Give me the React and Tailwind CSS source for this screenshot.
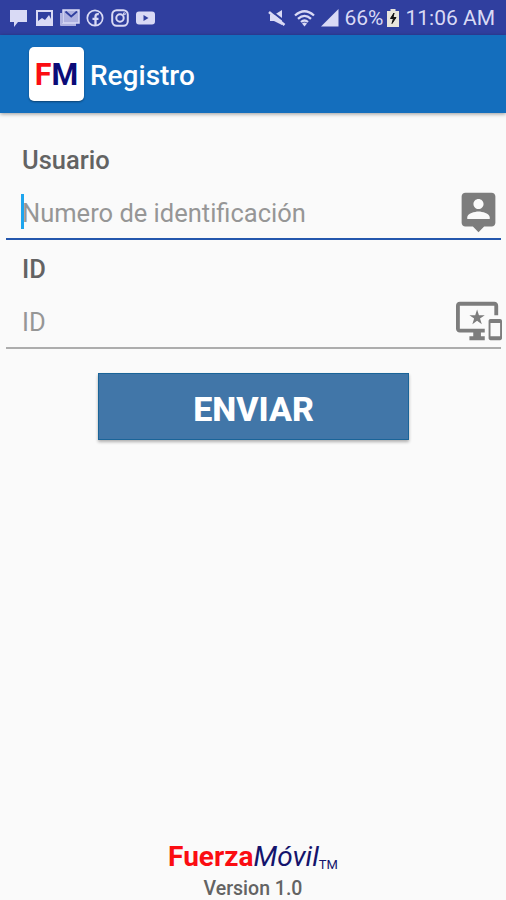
const statusIcons = [
  { id: 'chat', path: 'M1 1h17v12H9l-4 5v-5H1z' },
  { id: 'image', path: 'M1 1h17v16H1zM3 3v9l4-3 3 2 4-5 2 4V3z' },
];

function StatusBar() {
  return (
    <div className="h-[35px] bg-[#303f9f] flex items-center text-[#d9daf5]">
      <div className="flex items-center gap-[7px] pl-[9px]">
        {statusIcons.map((icon) => (
          <svg key={icon.id} className="w-[19px] h-[18px]" viewBox="0 0 19 18" fill="currentColor" fillRule="evenodd">
            <path d={icon.path} />
          </svg>
        ))}
        <svg className="w-[21px] h-[18px] -ml-[2px]" viewBox="0 0 21 18">
          <path d="M3 4H1v12q0 1 1 1h15v-3H3z" fill="currentColor" opacity=".75" />
          <path d="M4 1h16v13H4z" fill="currentColor" opacity=".75" />
          <path d="M6.500 2.500l5.700 5L18 2.500" fill="none" stroke="#303f9f" strokeWidth="1.800" />
          <path d="M4 1h16v13H4z" fill="none" stroke="currentColor" strokeWidth="1.500" />
        </svg>
        <svg className="w-[18px] h-[18px] -ml-[1px]" viewBox="0 0 18 18" fill="none" stroke="currentColor">
          <circle cx="9" cy="9" r="7.700" strokeWidth="1.700" />
          <path d="M9.500 17V7.500q0-2.800 3.300-2.300M6.500 9.800h6" strokeWidth="2.300" />
        </svg>
        <svg className="w-[18px] h-[18px]" viewBox="0 0 18 18" fill="none" stroke="currentColor" strokeWidth="2">
          <rect x="1.200" y="1.200" width="15.600" height="15.600" rx="4.500" />
          <circle cx="9" cy="9" r="3.700" />
          <circle cx="13.300" cy="4.700" r=".5" />
        </svg>
        <svg className="w-[19px] h-[18px]" viewBox="0 0 19 18" fillRule="evenodd" fill="currentColor">
          <path d="M3 2.500h13q3 0 3 3v7q0 3-3 3H3q-3 0-3-3v-7q0-3 3-3zM7.500 6v6l5-3z" />
        </svg>
      </div>
      <div className="flex items-center ml-auto pr-[11px]">
        <svg className="w-[18px] h-[18px]" viewBox="0 0 18 18">
          <path d="M2 6h4l8-5v15L6 12H2z" fill="currentColor" />
          <path d="M1 .500L17.500 13" stroke="#303f9f" strokeWidth="2" />
          <path d="M1 3L16.500 16" stroke="currentColor" strokeWidth="2.600" />
        </svg>
        <svg className="w-[21px] h-[18px] ml-[8px]" viewBox="0 0 21 18" fill="none" stroke="currentColor" strokeWidth="2.300">
          <path d="M1 6.500Q10.500-2 20 6.500M4 9.800Q10.500 4 17 9.800M7 13Q10.500 10 14 13" />
          <path d="M10.500 17.500L8 14.500q2.500-2 5 0z" fill="currentColor" stroke="none" />
        </svg>
        <svg className="w-[18px] h-[18px] ml-[6px]" viewBox="0 0 18 18" fill="currentColor">
          <path d="M17.500 0v17.500H0z" />
        </svg>
        <span className="ml-[5px] pt-[2px] text-[21px] leading-none">66%</span>
        <svg className="w-[12px] h-[18px] ml-[4px]" viewBox="0 0 12 18">
          <path d="M3.500 0h5v2H12v16H0V2h3.500z" fill="#e8e5dc" />
          <path d="M7 4L3.500 9.500h3L5 14.500l4-6H6z" fill="#111" stroke="#111" />
        </svg>
        <span className="ml-[6px] pt-[2px] text-[21px] leading-none">11:06 AM</span>
      </div>
    </div>
  );
}

function Header() {
  return (
    <header className="h-[78px] bg-[#146ebd] flex items-center pl-[29px] shadow-[0_1px_4px_rgba(0,0,0,0.4)]">
      <div className="w-[55px] h-[54px] pt-[2px] rounded-[5px] bg-white flex justify-center items-center shadow-[0_1px_2px_rgba(0,0,0,0.4)]">
        <span className="font-bold text-[30.5px] leading-none">
          <span className="text-[#fb0d12]">F</span>
          <span className="text-[#0b0b78]">M</span>
        </span>
      </div>
      <h1 className="ml-[6px] mt-[4px] text-[28px] leading-none font-medium text-white">Registro</h1>
    </header>
  );
}

function PersonPinIcon() {
  return (
    <svg className="w-[45px] h-[45px] -mt-[1px]" viewBox="0 0 24 24" fill="currentColor">
      <path d="M19 2H5c-1.110 0-2 .9-2 2v14c0 1.100.89 2 2 2h4l3 3 3-3h4c1.100 0 2-.9 2-2V4c0-1.100-.9-2-2-2zm-7 3.300c1.490 0 2.700 1.210 2.700 2.700 0 1.490-1.210 2.700-2.700 2.700-1.490 0-2.700-1.210-2.700-2.700 0-1.490 1.210-2.700 2.700-2.700zM18 16H6v-.9c0-2 4-3.100 6-3.100s6 1.100 6 3.100v.9z" />
    </svg>
  );
}

function DevicesIcon() {
  return (
    <svg className="w-[46px] h-[46px] -mr-[1px]" viewBox="0 0 24 24" fill="currentColor">
      <path d="M23 11.010L18 11c-.55 0-1 .45-1 1v9c0 .55.45 1 1 1h5c.55 0 1-.45 1-1v-9c0-.55-.45-.99-1-.99zM23 20h-5v-7h5v7zM20 2H2C.89 2 0 2.890 0 4v12c0 1.100.89 2 2 2h7v2H7v2h8v-2h-2v-2h2v-2H2V4h18v5h2V4c0-1.110-.9-2-2-2zm-8.030 7L11 6l-.97 3H7l2.470 1.760-.94 2.910 2.470-1.800 2.470 1.800-.94-2.910L15 9h-3.030z" />
    </svg>
  );
}

function App() {
  return (
    <div className="w-[506px] h-[900px] bg-[#fafafa] flex flex-col overflow-hidden font-[Roboto,sans-serif]">
      <StatusBar />
      <Header />

      <main className="flex-1">
        <div className="h-[127px] flex flex-col">
          <label className="pl-[22px] pt-[34px] text-[25.5px] leading-[26px] font-medium text-[#636363]">Usuario</label>
          <div className="mt-auto ml-[6px] mr-[5px] h-[54px] border-b-2 border-[#2457ad] flex items-center relative">
            <span className="absolute left-[15px] top-[8px] w-[3px] h-[35px] bg-[#1da5ee]" />
            <span className="pl-[16px] pt-[4px] text-[25.5px] leading-none text-[#969696]">Numero de identificación</span>
            <span className="ml-auto text-[#7d7d7d]"><PersonPinIcon /></span>
          </div>
        </div>

        <div className="h-[109px] flex flex-col">
          <label className="pl-[22px] pt-[16px] text-[25.5px] leading-[26px] font-medium text-[#636363]">ID</label>
          <div className="mt-auto ml-[6px] mr-[5px] h-[54px] border-b-2 border-[#adadad] flex items-center">
            <span className="pl-[16px] pt-[4px] text-[25.5px] leading-none text-[#969696]">ID</span>
            <span className="ml-auto text-[#7d7d7d]"><DevicesIcon /></span>
          </div>
        </div>

        <button className="block ml-[98px] mt-[24px] w-[311px] h-[67px] pt-[5px] bg-[#4176a8] border border-[#1a6498] text-white text-[34px] leading-none font-extrabold shadow-[0_2px_3px_rgba(0,0,0,0.3)]">
          ENVIAR
        </button>
      </main>

      <footer className="flex flex-col items-center text-center">
        <div className="flex items-end leading-none text-[28px]">
          <span className="font-bold text-[#fb0d12]">Fuerza</span>
          <span className="italic text-[#14146c]">Móvil</span>
          <span className="text-[13px] text-[#14146c]">TM</span>
        </div>
        <div className="mt-[6px] text-[19.5px] leading-[23px] font-medium text-[#636363]">Version 1.0</div>
      </footer>
    </div>
  );
}

export default App;
